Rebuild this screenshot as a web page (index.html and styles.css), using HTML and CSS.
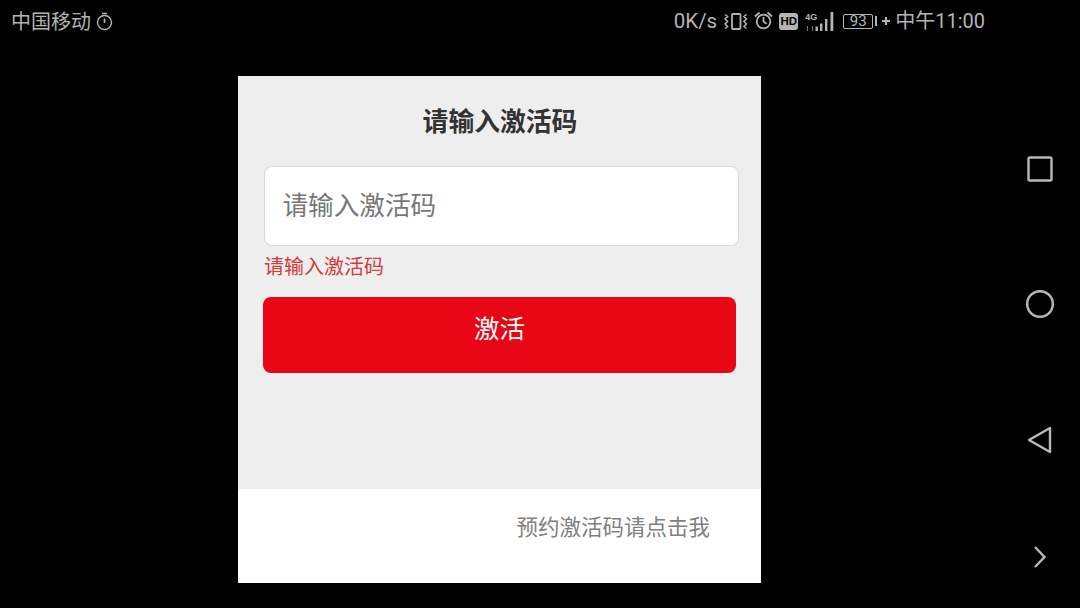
FILE: index.html
```html
<!DOCTYPE html>
<html lang="zh-CN">
<head>
<meta charset="utf-8">
<title>请输入激活码</title>
<link rel="stylesheet" href="styles.css">
</head>
<body>
<div class="screen">
  <div class="main">
    <header class="status">
      <div class="status-left">
        <span class="carrier">中国移动</span>
        <svg class="ic-timer" width="17" height="19" viewBox="0 0 17 19"><circle cx="8.500" cy="10.500" r="7" fill="none" stroke="#b4b4b4" stroke-width="1.400"/><path d="M6 1.500h5M8.500 6.500v4.500" stroke="#b4b4b4" stroke-width="1.600" fill="none"/></svg>
      </div>
      <div class="status-right">
        <span class="speed">0K/s</span>
        <svg class="ic-vib" width="25" height="17" viewBox="0 0 25 17"><rect x="9" y="1" width="8.500" height="15" rx="1" fill="none" stroke="#b4b4b4" stroke-width="1.800"/><path d="M2 1.500l2.600 2-2.600 2.500 2.600 2.500-2.600 2.500 2.600 2.500-2.600 2M23.500 1.500l-2.600 2 2.600 2.500-2.600 2.500 2.600 2.500-2.600 2.500 2.600 2" fill="none" stroke="#b4b4b4" stroke-width="1.500"/></svg>
        <svg class="ic-alarm" width="19" height="19" viewBox="0 0 19 19"><circle cx="9.500" cy="10.500" r="6.800" fill="none" stroke="#b4b4b4" stroke-width="1.800"/><path d="M9.500 6v4.500l3.200 2.400M1 5.500l4.500-4M18 5.500l-4.500-4" fill="none" stroke="#b4b4b4" stroke-width="1.800"/></svg>
        <span class="hd">HD</span>
        <span class="signal">
          <svg width="29" height="19" viewBox="0 0 29 19"><path d="M10.500 14.500h2.400V19h-2.400zM15 11.500h2.400V19H15zM20 7h2.400v12H20zM25.500 0h2.800v19h-2.800z" fill="#b4b4b4"/><path d="M2.500 14v5M7.500 14v5" stroke="#777" stroke-width="1.200" fill="none"/></svg>
          <span class="net">4G</span>
        </span>
        <span class="battery"><span class="batt-num">93</span></span>
        <span class="batt-tip"></span>
        <svg class="plus" width="8" height="8" viewBox="0 0 8 8"><path d="M4 0v8M0 4h8" stroke="#b4b4b4" stroke-width="2.200" fill="none"/></svg>
        <span class="clock">中午11:00</span>
      </div>
    </header>
    <div class="stage">
      <section class="dialog">
        <div class="dialog-top">
          <h1 class="title">请输入激活码</h1>
          <div class="input">请输入激活码</div>
          <p class="error">请输入激活码</p>
          <button class="activate" type="button">激活</button>
        </div>
        <footer class="dialog-foot">
          <a class="reserve">预约激活码请点击我</a>
        </footer>
      </section>
    </div>
  </div>
  <nav class="navbar">
    <svg width="28" height="28" viewBox="0 0 28 28"><rect x="2.500" y="2.500" width="23" height="23" rx="1.500" fill="none" stroke="#b9b9b9" stroke-width="2.400"/></svg>
    <svg width="30" height="30" viewBox="0 0 30 30"><circle cx="15" cy="15" r="12.800" fill="none" stroke="#b9b9b9" stroke-width="2.400"/></svg>
    <svg width="28" height="30" viewBox="0 0 28 30"><path d="M24 3L3 15l21 12z" fill="none" stroke="#b9b9b9" stroke-width="2.400" stroke-linejoin="round"/></svg>
    <svg width="16" height="24" viewBox="0 0 16 24"><path d="M3 2l9.500 10L3 22" fill="none" stroke="#b9b9b9" stroke-width="2.400"/></svg>
  </nav>
</div>
</body>
</html>
```
FILE: styles.css
```css
* { box-sizing: border-box; }
html, body { margin: 0; padding: 0; background: #000; }
body {
  width: 1080px;
  height: 608px;
  overflow: hidden;
  font-family: "Noto Sans CJK SC", "Roboto", sans-serif;
}
.screen { display: flex; width: 1080px; height: 608px; background: #000; }
.main { width: 1000px; display: flex; flex-direction: column; }
.status {
  height: 42px;
  display: flex;
  justify-content: space-between;
  align-items: center;
  padding: 0 15px 0 11px;
  color: #b4b4b4;
  font-size: 20px;
  line-height: 1;
}
.status-left { display: flex; align-items: center; gap: 5px; }
.status-right { display: flex; align-items: center; }
.speed { font-family: "Roboto", sans-serif; font-size: 20.500px; }
.ic-vib { margin-left: 6px; }
.ic-alarm { margin-left: 6px; margin-top: -1px; }
.hd {
  margin-left: 6px;
  width: 19px;
  height: 17px;
  border-radius: 3px;
  background: #b4b4b4;
  color: #000;
  font: bold 11.500px/17px "Liberation Sans", sans-serif;
  text-align: center;
}
.signal { position: relative; display: block; width: 29px; height: 19px; margin-left: 7px; }
.signal svg { display: block; }
.net {
  position: absolute;
  left: 0;
  top: 1px;
  font: bold 9px/9px "Liberation Sans", sans-serif;
}
.battery {
  margin-left: 9px;
  width: 30px;
  height: 15px;
  border: 1px solid #b4b4b4;
  border-radius: 2px;
  display: flex;
  align-items: center;
  justify-content: center;
}
.batt-num { font: 15px/1 "Roboto", sans-serif; }
.batt-tip { width: 2px; height: 10px; margin-left: 2px; background: #b4b4b4; }
.plus { margin-left: 5px; display: block; }
.clock { margin-left: 5px; font-family: "Roboto", "Noto Sans CJK SC", sans-serif; white-space: nowrap; }
.stage { padding: 34px 0 0 238px; }
.dialog { width: 523px; height: 507px; display: flex; flex-direction: column; background: #fff; }
.dialog-top {
  height: 413px;
  background: #eeeeee;
  padding: 24px 22px 0 26px;
}
.title {
  margin: 0;
  padding-right: 3px;
  text-align: center;
  font-size: 25.800px;
  line-height: 40px;
  font-weight: 700;
  color: #333;
}
.input {
  margin-top: 26px;
  height: 80px;
  border: 1px solid #d9d9d9;
  border-radius: 8px;
  background: #fff;
  padding-left: 17.500px;
  font-size: 25.600px;
  line-height: 74px;
  color: #777;
}
.error {
  margin: 6px 0 0;
  font-size: 20px;
  line-height: 28px;
  color: #d33a3a;
}
.activate {
  display: block;
  margin: 17px 0 0 -1px;
  width: 473px;
  height: 76px;
  padding: 0 0 16px;
  border: 0;
  border-radius: 8px;
  background: #e90614;
  color: #fff;
  font-family: inherit;
  font-size: 25.500px;
  line-height: 40px;
}
.dialog-foot {
  flex: 1;
  display: flex;
  justify-content: flex-end;
  align-items: center;
  padding: 0 51px 20px 0;
}
.reserve { font-size: 21.500px; color: #808080; line-height: 30px; }
.navbar {
  width: 80px;
  height: 608px;
  display: flex;
  flex-direction: column;
  align-items: center;
  padding: 155px 1px 0 0;
}
.navbar svg { display: block; flex: none; }
.navbar svg:nth-child(1) { margin-bottom: 106px; }
.navbar svg:nth-child(2) { margin-bottom: 106px; }
.navbar svg:nth-child(3) { margin-bottom: 90px; }
```
